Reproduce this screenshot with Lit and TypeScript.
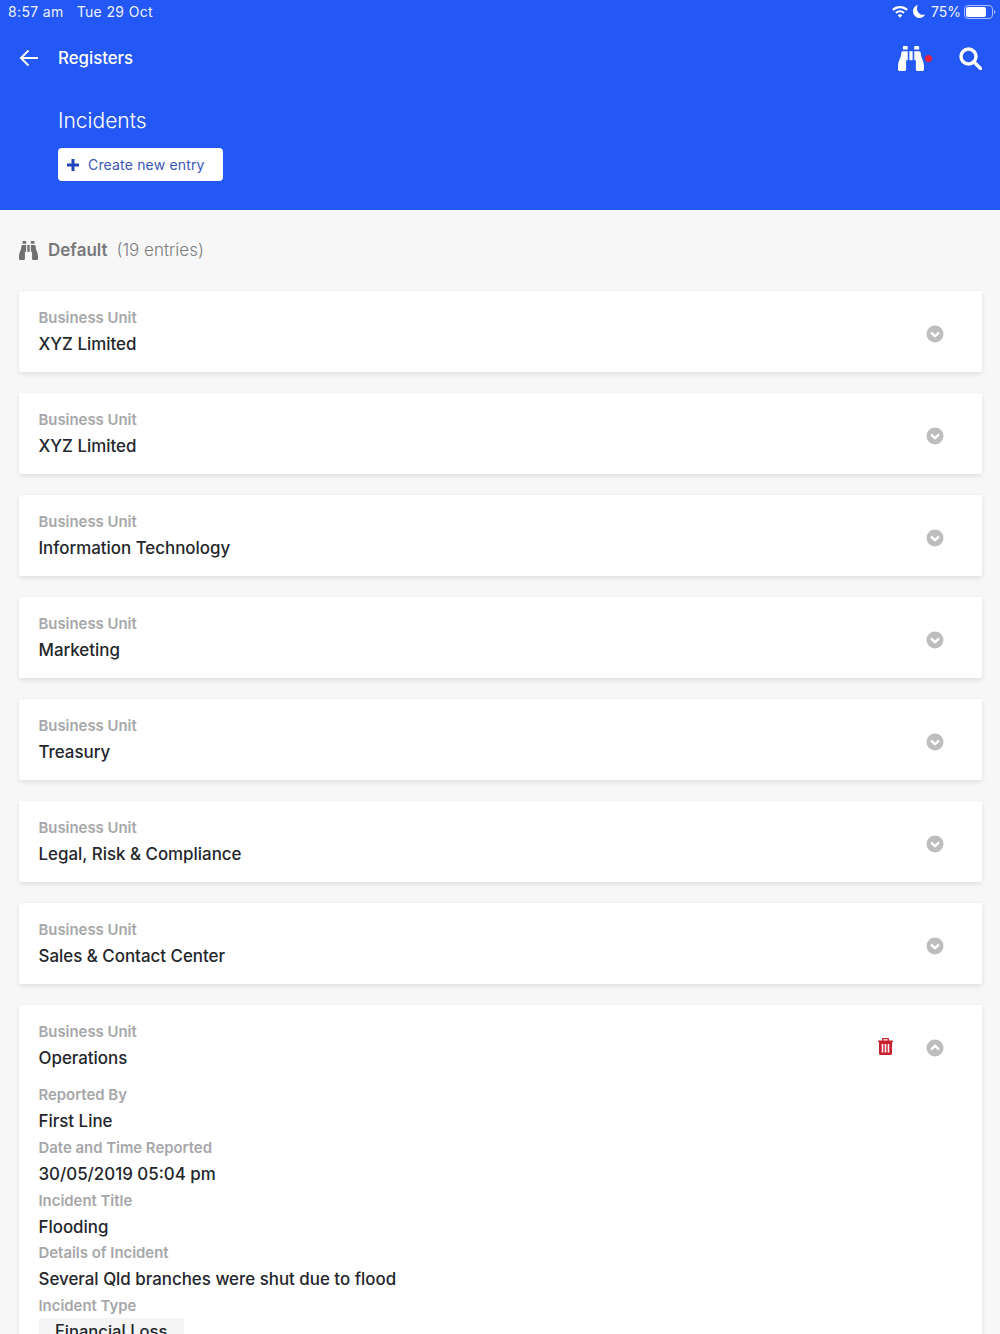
import { LitElement, html, css, svg } from "lit";
import { customElement } from "lit/decorators.js";

const binoculars = svg`<path d="M416 48c0-8.840-7.160-16-16-16h-64c-8.840 0-16 7.160-16 16v48h96V48zM63.910 159.990C61.400 253.840 3.460 274.220 0 404v44c0 17.670 14.330 32 32 32h96c17.670 0 32-14.330 32-32V288h32V128H95.840c-17.630 0-31.450 14.370-31.930 31.990zm384.180 0c-.48-17.620-14.300-31.990-31.930-31.990H320v160h32v160c0 17.670 14.330 32 32 32h96c17.670 0 32-14.330 32-32v-44c-3.460-129.780-61.400-150.160-63.910-244.010zM176 32h-64c-8.840 0-16 7.160-16 16v48h96V48c0-8.840-7.160-16-16-16zm48 256h64V128h-64v160z"/>`;

const collapsed = [
  "XYZ Limited",
  "XYZ Limited",
  "Information Technology",
  "Marketing",
  "Treasury",
  "Legal, Risk & Compliance",
  "Sales & Contact Center",
];

const details = [
  ["Reported By", "First Line"],
  ["Date and Time Reported", "30/05/2019 05:04 pm"],
  ["Incident Title", "Flooding"],
  ["Details of Incident", "Several Qld branches were shut due to flood"],
];

@customElement("app-root")
export class AppRoot extends LitElement {
  static styles = css`
    :host {
      display: block;
      height: 1334px;
      overflow: hidden;
      background: #f7f7f7;
      font-family: Inter, "Liberation Sans", sans-serif;
      color: #23262b;
    }
    svg { display: block; }
    .header {
      height: 210px;
      box-sizing: border-box;
      background: #2358f6;
      color: #fff;
      display: flex;
      flex-direction: column;
    }
    .status {
      height: 23px;
      display: flex;
      align-items: center;
      justify-content: space-between;
      padding: 0 4px 0 8px;
      font-size: 14px;
      letter-spacing: 0.35px;
      color: #eef2ff;
    }
    .status-left { display: flex; gap: 13px; }
    .status-right { display: flex; align-items: center; letter-spacing: 0; }
    .wifi { margin-right: 5px; }
    .moon { margin-right: 6px; }
    .battery { margin-left: 3px; }
    .nav {
      height: 44px;
      margin-top: 13px;
      display: flex;
      align-items: center;
      padding: 0 18px 0 19px;
    }
    .nav-title {
      margin-left: 19px;
      font-size: 16.800px;
      font-weight: 500;
      flex: 1;
    }
    .bino-wrap { position: relative; margin-right: 35px; }
    .dot {
      position: absolute;
      left: 27px;
      top: 9px;
      width: 7px;
      height: 7px;
      border-radius: 50%;
      background: #e0213f;
    }
    .title {
      margin: 27px 0 0 58px;
      font-size: 21px;
      line-height: 28px;
      font-weight: 300;
    }
    .create {
      margin: 13px 0 0 58px;
      width: 165px;
      height: 33px;
      box-sizing: border-box;
      display: flex;
      align-items: center;
      padding-left: 9px;
      background: #fff;
      border-radius: 4px;
      color: #3a57b5;
      font-size: 14px;
      letter-spacing: 0.17px;
    }
    .create svg { margin-right: 9px; }
    .main { padding: 0 18px 0 19px; }
    .view {
      height: 81px;
      padding-bottom: 1px;
      box-sizing: border-box;
      display: flex;
      align-items: center;
      color: #77787a;
      font-size: 17px;
    }
    .view svg { margin-right: 10px; }
    .view b { font-weight: 600; margin-right: 9px; }
    .view span { color: #7d7e80; font-weight: 300; }
    .card {
      position: relative;
      box-sizing: border-box;
      background: #fff;
      border-radius: 2px;
      box-shadow: 0 2px 5px rgba(0, 0, 0, 0.1);
      padding: 17px 19px 0 19.500px;
      height: 81px;
      margin-bottom: 21px;
    }
    .card.open { height: 420px; margin-bottom: 0; }
    .label {
      color: #a6a7a9;
      font-size: 14.900px;
      line-height: 20px;
      font-weight: 600;
    }
    .value {
      font-size: 16.900px;
      line-height: 26px;
      font-weight: 500;
      margin-top: 3px;
      color: #23262b;
    }
    .row {
      display: flex;
      align-items: center;
      justify-content: space-between;
      padding-right: 19px;
    }
    .chev { margin-top: 2px; }
    .actions { display: flex; align-items: center; gap: 33px; margin-top: 2px; }
    .trash { margin-top: -2px; }
    .section { margin-top: 14px; }
    .field { height: 52.750px; }
    .chip {
      display: inline-block;
      margin-top: 2px;
      padding: 0 17px 0 16.500px;
      height: 30px;
      line-height: 27px;
      background: #f5f5f5;
      font-size: 16.600px;
      font-weight: 500;
    }
  `;

  private chevron(up = false, cls = "") {
    return html`<svg class=${cls} width="18" height="18" viewBox="0 0 18 18" aria-hidden="true">
      <circle cx="9" cy="9" r="8.500" fill="#bdbdbd"></circle>
      <path d=${up ? "M5 10.500 9 6.800l4 3.700" : "M5 7.500l4 3.700 4-3.700"} fill="none" stroke="#fff" stroke-width="2.400"></path>
    </svg>`;
  }

  render() {
    return html`
      <div class="header">
        <div class="status">
          <div class="status-left"><span>8:57 am</span><span>Tue 29 Oct</span></div>
          <div class="status-right">
            <svg class="wifi" width="16" height="12" viewBox="0 0 17 13" fill="#fff">
              <path d="M8.500 0C5.200 0 2.300 1.300 0 3.400l1.600 1.700C3.400 3.400 5.800 2.400 8.500 2.400s5.100 1 6.900 2.700L17 3.400C14.700 1.300 11.800 0 8.500 0z"/>
              <path d="M8.500 4.500c-2 0-3.800.8-5.200 2.100l1.600 1.700c1-.9 2.200-1.500 3.600-1.500s2.600.6 3.600 1.500l1.600-1.700c-1.400-1.300-3.200-2.100-5.200-2.100z"/>
              <path d="M8.500 9c-1 0-1.800.4-2.400 1l2.400 2.600 2.400-2.600c-.6-.6-1.400-1-2.400-1z"/>
            </svg>
            <svg class="moon" width="12" height="13" viewBox="0 0 12 13" fill="#fff">
              <path d="M4.800 0C2 .7 0 3.200 0 6.200 0 9.900 2.900 13 6.500 13c2.500 0 4.600-1.400 5.500-3.500-.6.200-1.200.3-1.800.3C6.700 9.800 4 7 4 3.400 4 2.200 4.300 1 4.800 0z"/>
            </svg>
            <span>75%</span>
            <svg class="battery" width="32" height="14" viewBox="0 0 32 14">
              <rect x=".5" y=".5" width="28" height="13" rx="3.500" fill="none" stroke="#a9bdfb"></rect>
              <rect x="2" y="2" width="20" height="10" rx="2" fill="#fff"></rect>
              <path d="M30 5v4c.8-.3 1.300-1.100 1.300-2s-.5-1.700-1.300-2z" fill="#a9bdfb"></path>
            </svg>
          </div>
        </div>
        <div class="nav">
          <svg width="20" height="18" viewBox="0 0 20 18" fill="none" stroke="#fff" stroke-width="2">
            <path d="M19 9H2M9.500 1.500 2 9l7.500 7.500"></path>
          </svg>
          <div class="nav-title">Registers</div>
          <div class="bino-wrap">
            <svg width="26" height="25" viewBox="0 32 512 448" preserveAspectRatio="none" fill="#fff">${binoculars}</svg>
            <div class="dot"></div>
          </div>
          <svg width="23" height="23" viewBox="0 0 23 23" fill="none" stroke="#fff" stroke-width="3.400">
            <circle cx="9.500" cy="9.500" r="7.500"></circle>
            <path d="M15 15l6.500 6.500" stroke-linecap="round"></path>
          </svg>
        </div>
        <div class="title">Incidents</div>
        <div class="create">
          <svg width="12" height="12" viewBox="0 0 12 12" fill="#2444b5"><path d="M4.500 0h3v4.500H12v3H7.500V12h-3V7.500H0v-3h4.500z"/></svg>
          Create new entry
        </div>
      </div>
      <div class="main">
        <div class="view">
          <svg width="19" height="19" viewBox="0 32 512 448" preserveAspectRatio="none" fill="#707070">${binoculars}</svg>
          <b>Default</b><span>(19 entries)</span>
        </div>
        ${collapsed.map(
          (name) => html`
            <div class="card">
              <div class="row">
                <div>
                  <div class="label">Business Unit</div>
                  <div class="value">${name}</div>
                </div>
                ${this.chevron(false, "chev")}
              </div>
            </div>
          `
        )}
        <div class="card open">
          <div class="row">
            <div>
              <div class="label">Business Unit</div>
              <div class="value">Operations</div>
            </div>
            <div class="actions">
              <svg class="trash" width="15" height="17" viewBox="0 0 15 17" fill="#c8202f">
                <path d="M5 0h5c.6 0 1 .4 1 1v1.500h3.500c.3 0 .5.2.5.5v.500c0 .3-.2.500-.5.500H14v11.500c0 .8-.7 1.500-1.500 1.500h-10C1.700 17 1 16.300 1 15.500V4H.5C.2 4 0 3.800 0 3.500V3c0-.3.200-.5.500-.5H4V1c0-.6.400-1 1-1zm.3 1.300v1.200h4.400V1.300zM3.700 6v8.500h1.600V6zm3 0v8.500h1.600V6zm3 0v8.500h1.600V6z" fill-rule="evenodd"/>
              </svg>
              ${this.chevron(true)}
            </div>
          </div>
          <div class="section">
            ${details.map(
              ([k, v]) => html`
                <div class="field">
                  <div class="label">${k}</div>
                  <div class="value">${v}</div>
                </div>
              `
            )}
            <div class="label">Incident Type</div>
            <div class="chip">Financial Loss</div>
          </div>
        </div>
      </div>
    `;
  }
}
